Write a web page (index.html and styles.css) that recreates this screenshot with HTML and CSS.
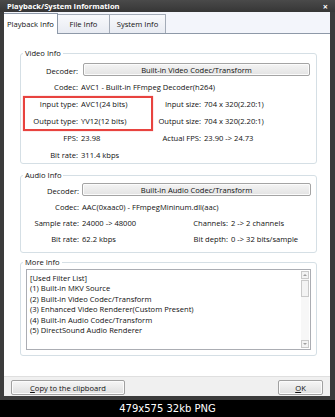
FILE: index.html
```html
<!DOCTYPE html>
<html lang="en">
<head>
    <meta charset="UTF-8">
    <title>Playback/System Information</title>
    <link rel="stylesheet" href="styles.css">
</head>
<body>
    <div class="window">
        <div class="titlebar">
            <span class="title">Playback/System Information</span>
            <span class="close">×</span>
        </div>
        <div class="client">
            <div class="tabs">
                <div class="tab active">Playback Info</div>
                <div class="tab tab-file">File Info</div>
                <div class="tab tab-system">System Info</div>
            </div>

            <div class="page">
                <div class="group video">
                    <span class="group-title">Video Info</span>
                    <div class="grid video-grid">
                        <span class="label">Decoder:</span>
                        <button class="wide-btn">Built-in Video Codec/Transform</button>

                        <span class="label">Codec:</span>
                        <span class="value full">AVC1 - Built-in FFmpeg Decoder(h264)</span>

                        <span class="label">Input type:</span>
                        <span class="value">AVC1(24 bits)</span>
                        <span class="label">Input size:</span>
                        <span class="value">704 x 320(2.20:1)</span>

                        <span class="label">Output type:</span>
                        <span class="value">YV12(12 bits)</span>
                        <span class="label">Output size:</span>
                        <span class="value">704 x 320(2.20:1)</span>

                        <span class="label">FPS:</span>
                        <span class="value">23.98</span>
                        <span class="label">Actual FPS:</span>
                        <span class="value">23.90 -&gt; 24.73</span>

                        <span class="label">Bit rate:</span>
                        <span class="value full">311.4 kbps</span>
                    </div>
                    <div class="highlight"></div>
                </div>

                <div class="group audio">
                    <span class="group-title">Audio Info</span>
                    <div class="grid audio-grid">
                        <span class="label">Decoder:</span>
                        <button class="wide-btn">Built-in Audio Codec/Transform</button>

                        <span class="label">Codec:</span>
                        <span class="value full">AAC(0xaac0) - FFmpegMininum.dll(aac)</span>

                        <span class="label">Sample rate:</span>
                        <span class="value">24000 -&gt; 48000</span>
                        <span class="label">Channels:</span>
                        <span class="value">2 -&gt; 2 channels</span>

                        <span class="label">Bit rate:</span>
                        <span class="value">62.2 kbps</span>
                        <span class="label">Bit depth:</span>
                        <span class="value">0 -&gt; 32 bits/sample</span>
                    </div>
                </div>

                <div class="group more">
                    <span class="group-title">More Info</span>
                    <div class="textbox">
                        <div class="lines">
                            <div>[Used Filter List]</div>
                            <div>(1) Built-in MKV Source</div>
                            <div>(2) Built-in Video Codec/Transform</div>
                            <div>(3) Enhanced Video Renderer(Custom Present)</div>
                            <div>(4) Built-in Audio Codec/Transform</div>
                            <div>(5) DirectSound Audio Renderer</div>
                        </div>
                        <div class="scrollbar">
                            <div class="sb-btn up"></div>
                            <div class="sb-thumb"></div>
                            <div class="sb-btn down"></div>
                        </div>
                    </div>
                </div>
            </div>

            <div class="footer">
                <button class="btn copy"><u>C</u>opy to the clipboard</button>
                <button class="btn ok"><u>O</u>K</button>
            </div>
        </div>
    </div>
    <div class="caption">479x575 32kb PNG</div>
</body>
</html>
```

FILE: styles.css
```css
:root {
    --frame-color: #3b3b3b;
    --group-border: #d5dfe5;
    --text-color: #111;
}

* {
    margin: 0;
    padding: 0;
    box-sizing: border-box;
}

body {
    background: #000;
    font-family: "Open Sans", "Liberation Sans", sans-serif;
    font-size: 7.6px;
    color: var(--text-color);
    width: 335px;
}

.window {
    width: 335px;
    height: 400px;
    background: var(--frame-color);
    display: flex;
    flex-direction: column;
}

.titlebar {
    height: 12px;
    padding: 0 7px 0 7px;
    display: flex;
    justify-content: space-between;
    align-items: center;
    background: linear-gradient(#4a4a4a, #363636);
    color: #fff;
    font-weight: bold;
    font-size: 7.6px;
}

.close {
    font-size: 9px;
}

.client {
    flex: 1;
    margin: 0 5px 4px 4px;
    background: #f0f0f0;
    display: flex;
    flex-direction: column;
}

/* tab strip */
.tabs {
    height: 22px;
    display: flex;
    align-items: flex-end;
    background: #f3f5fb;
    border-bottom: 1px solid #8e99a8;
}

.tab {
    height: 19px;
    width: 52px;
    border: 1px solid #a3abb7;
    border-bottom: none;
    background: linear-gradient(#f8f9fc, #e8ebf2);
    display: flex;
    align-items: center;
    justify-content: center;
}

.tab.active {
    width: 54px;
    height: 21px;
    margin-bottom: -1px;
    background: #fff;
    border-color: #8e99a8;
    position: relative;
    z-index: 1;
    border-left: none;
}

.tab-file {
    border-left: none;
}

.tab-system {
    width: 56px;
    border-left: none;
}

.page {
    height: 342px;
    background: #fff;
    padding: 19px 13px 0 16px;
    display: flex;
    flex-direction: column;
}

/* group boxes */
.group {
    border: 1px solid var(--group-border);
    border-radius: 3px;
    position: relative;
}

.group-title {
    position: absolute;
    top: -6px;
    left: 2px;
    padding: 0 2px;
    line-height: 10px;
    background: #fff;
}

.grid {
    display: grid;
    column-gap: 3px;
    align-items: center;
}

.label {
    text-align: right;
    white-space: nowrap;
}

.value {
    white-space: nowrap;
}

.full {
    grid-column: 2 / -1;
}

.wide-btn {
    grid-column: 2 / -1;
    align-self: start;
    height: 13px;
    border: 1px solid #a4a4a4;
    border-radius: 2px;
    background: linear-gradient(#f4f4f4, #e3e3e3);
    box-shadow: inset 0 0 0 1px #fbfbfb;
    font: inherit;
    color: var(--text-color);
}

.video {
    padding: 9px 6px 0 0;
}

.video-grid {
    grid-template-columns: 57px 69px 48px 1fr;
    grid-template-rows: 15px repeat(5, 17px);
}

.video-grid .wide-btn {
    margin-left: 2px;
}

.highlight {
    position: absolute;
    left: 2px;
    top: 42px;
    width: 130px;
    height: 35px;
    border: 2px solid #e8433f;
    box-shadow: 0 0 1px rgba(232, 67, 63, 0.6);
}

.audio {
    margin-top: 11px;
    padding: 7px 5px 5px 0;
}

.audio-grid {
    grid-template-columns: 58px 92px 51px 1fr;
    grid-template-rows: repeat(4, 16px);
}

.more {
    margin-top: 9px;
    padding: 6px 5px 5px 5px;
}

.textbox {
    height: 81px;
    border: 1px solid #abadb3;
    display: flex;
}

.lines {
    flex: 1;
    padding: 3px 0 0 3px;
    line-height: 10.4px;
    white-space: nowrap;
}

.scrollbar {
    width: 8px;
    margin: 1px 1px 1px 0;
    display: flex;
    flex-direction: column;
    background: #f7f7f7;
}

.sb-btn {
    height: 8px;
    border: 1px solid #c9c9c9;
    background: #f3f3f3;
    display: flex;
    align-items: center;
    justify-content: center;
}

.sb-btn::after {
    content: '';
    border-left: 2px solid transparent;
    border-right: 2px solid transparent;
}

.sb-btn.up::after {
    border-bottom: 2px solid #a0a0a0;
}

.sb-btn.down {
    margin-top: auto;
}

.sb-btn.down::after {
    border-top: 2px solid #a0a0a0;
}

.sb-thumb {
    height: 17px;
    margin-top: 1px;
    border: 1px solid #c9c9c9;
    background: #f3f3f3;
}

/* bottom buttons */
.footer {
    height: 20px;
    border-top: 1px solid #dfdfdf;
    padding: 3px 7px 0 7px;
    display: flex;
    justify-content: space-between;
    align-items: flex-start;
}

.btn {
    height: 15px;
    border: 1px solid #a0a0a0;
    border-radius: 2px;
    background: linear-gradient(#f6f6f6, #dfdfdf);
    box-shadow: inset 0 0 0 1px #fbfbfb;
    font: inherit;
    color: var(--text-color);
}

.btn.copy {
    width: 114px;
}

.btn.ok {
    width: 45px;
}

.caption {
    height: 17px;
    line-height: 17px;
    text-align: center;
    color: #fff;
    font-family: "DejaVu Sans", sans-serif;
    font-size: 10px;
}
```
